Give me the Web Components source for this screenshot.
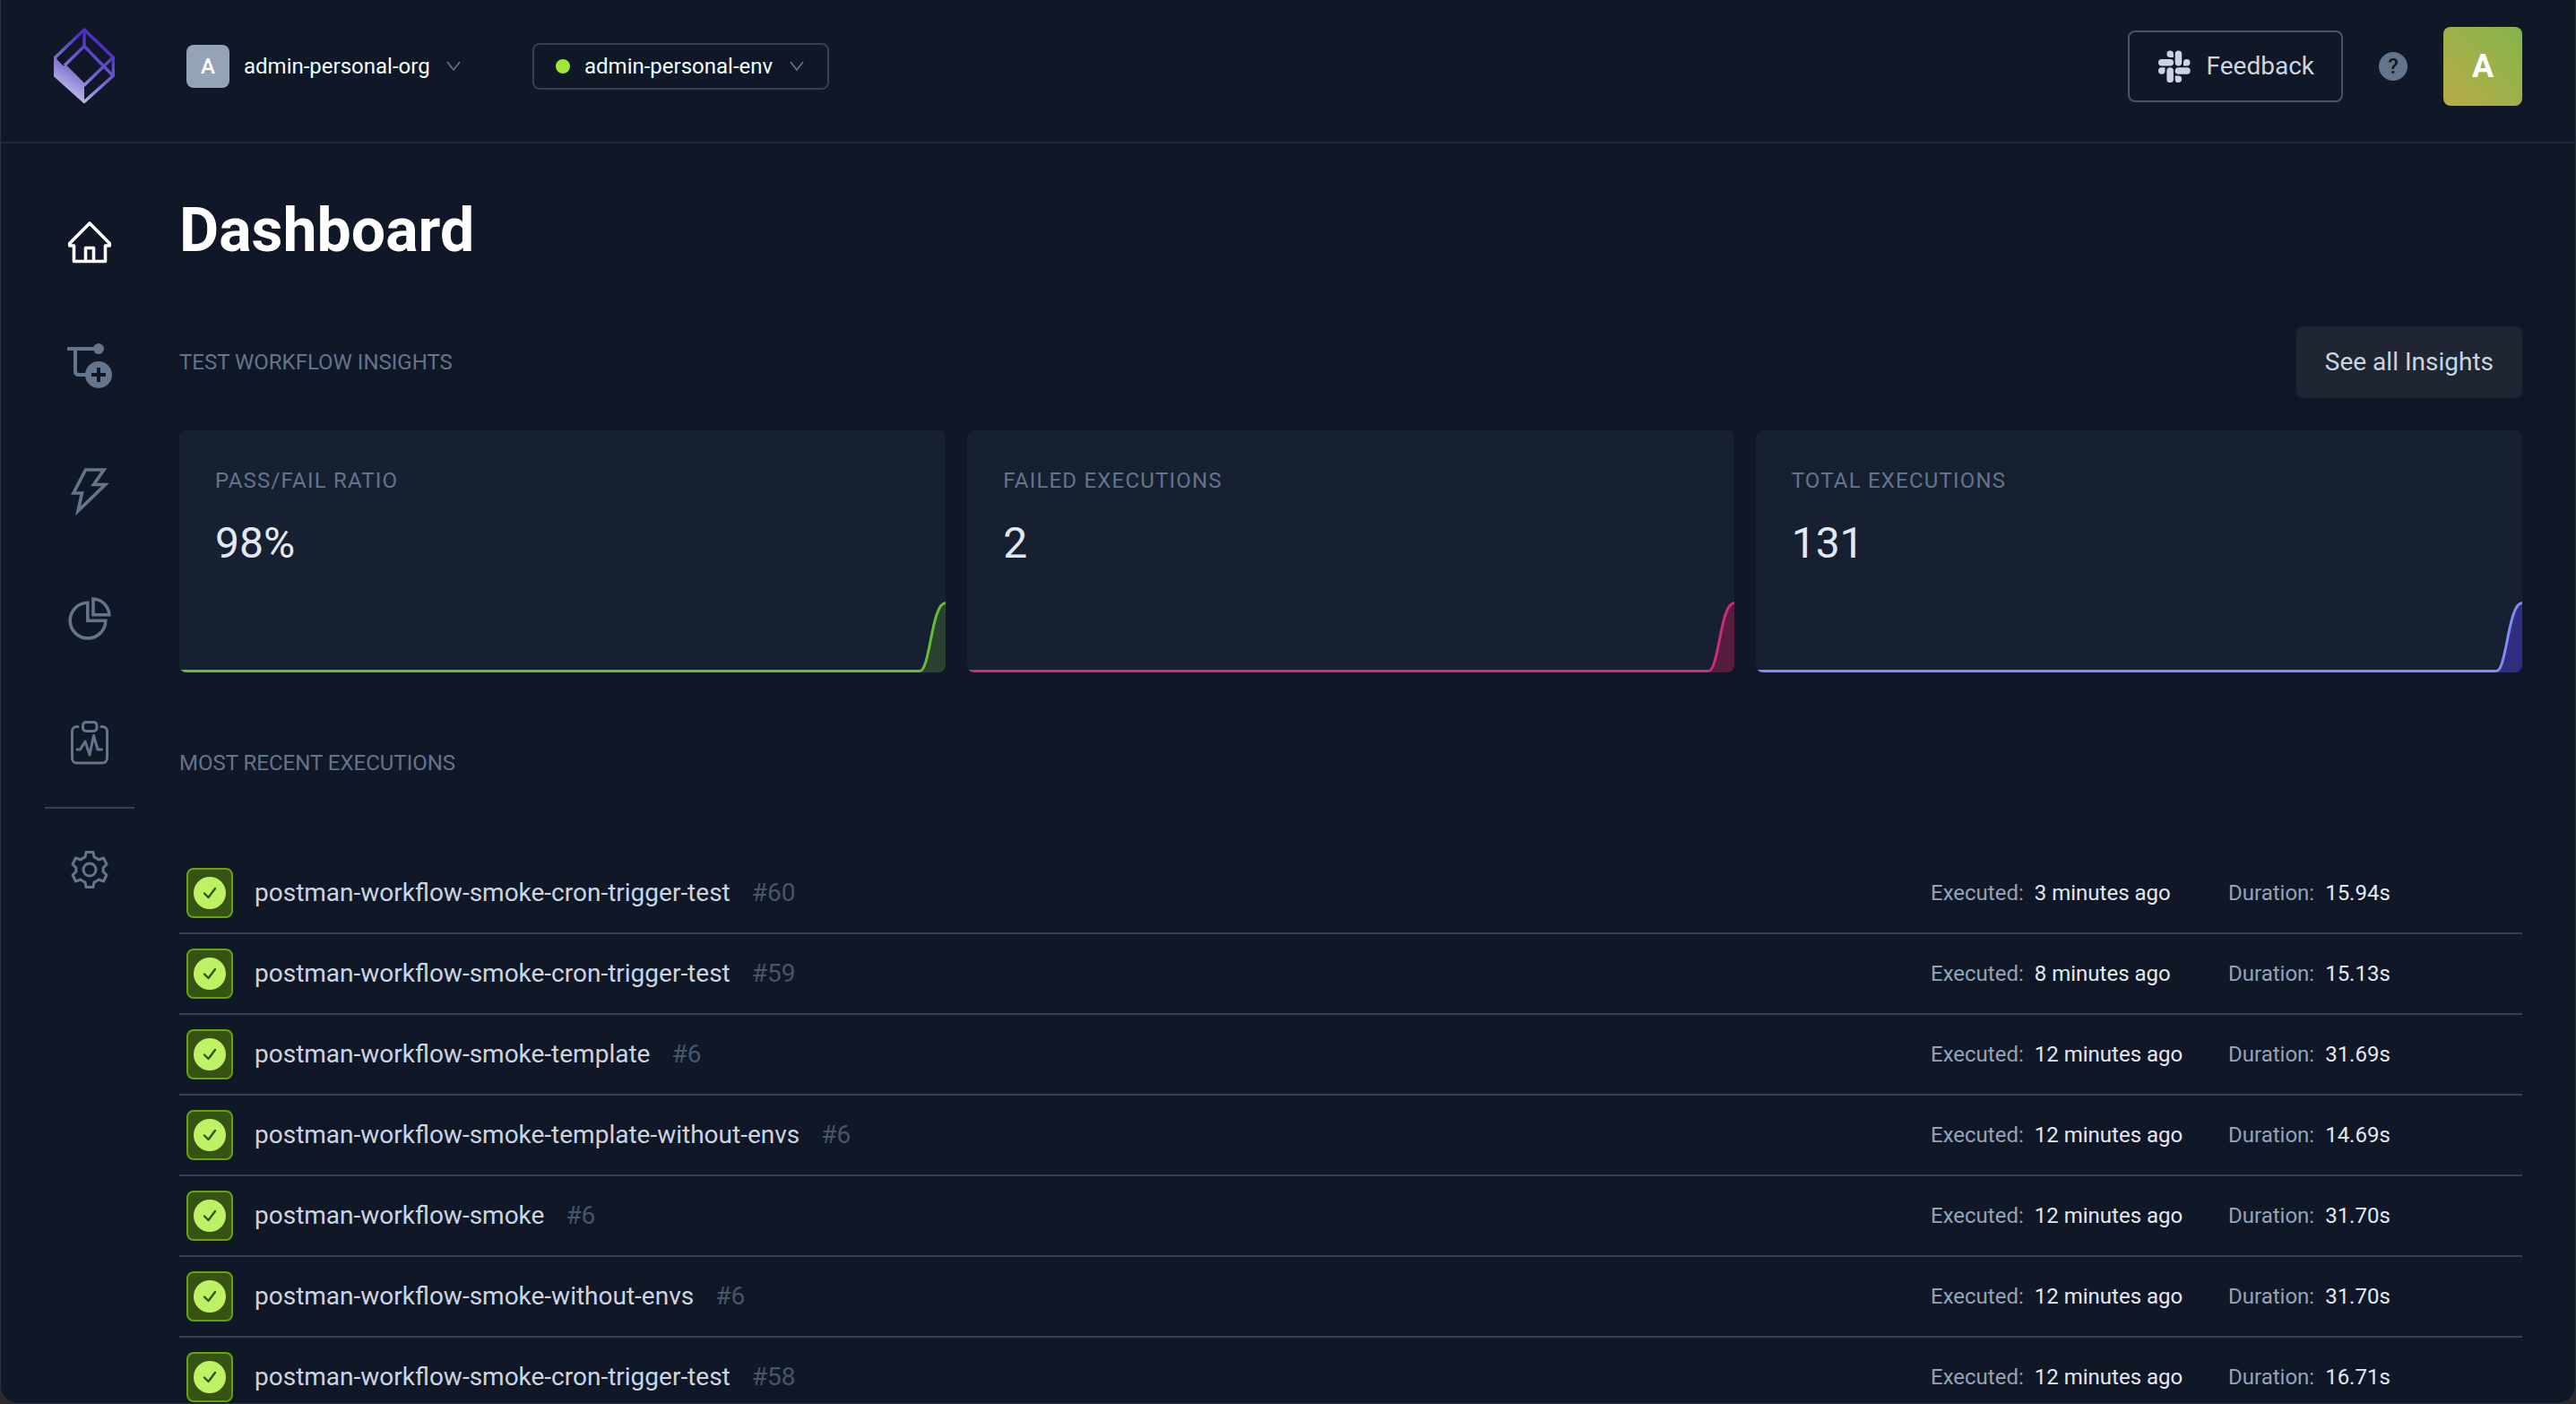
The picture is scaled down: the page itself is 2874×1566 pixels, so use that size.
<!DOCTYPE html>
<html lang="en">
<head>
<meta charset="utf-8">
<meta name="viewport" content="width=device-width, initial-scale=1">
<title>Dashboard</title>
<style>
  :root {
    --bg: #101726;
    --card: #172030;
    --line: #334155;
    --muted: #64748b;
    --soft: #94a3b8;
    --text: #cbd5e1;
    --strong: #e2e8f0;
  }
  html, body { margin: 0; height: 100%; background: #2b2a29; }
  body { font-family: Roboto, "Liberation Sans", sans-serif; font-size: 24px; line-height: 28px; color: var(--text); }
</style>
</head>
<body>
<app-shell>
  <top-bar slot="header">
    <org-picker></org-picker>
    <env-picker></env-picker>
  </top-bar>
  <side-nav slot="nav"></side-nav>
  <section-block heading="Test workflow insights">
    <action-button slot="action">See all Insights</action-button>
    <card-grid>
      <metric-card label="Pass/fail ratio" value="98%" style="--stroke:#66bd37;--fill:#2b4132"></metric-card>
      <metric-card label="Failed executions" value="2" style="--stroke:#cb2c80;--fill:#561d3d"></metric-card>
      <metric-card label="Total executions" value="131" style="--stroke:#818cf8;--fill:#312e81"></metric-card>
    </card-grid>
  </section-block>
  <section-block heading="Most recent executions" class="list">
    <execution-list>
      <execution-row name="postman-workflow-smoke-cron-trigger-test" number="60" when="3 minutes ago" duration="15.94s"></execution-row>
      <execution-row name="postman-workflow-smoke-cron-trigger-test" number="59" when="8 minutes ago" duration="15.13s"></execution-row>
      <execution-row name="postman-workflow-smoke-template" number="6" when="12 minutes ago" duration="31.69s"></execution-row>
      <execution-row name="postman-workflow-smoke-template-without-envs" number="6" when="12 minutes ago" duration="14.69s"></execution-row>
      <execution-row name="postman-workflow-smoke" number="6" when="12 minutes ago" duration="31.70s"></execution-row>
      <execution-row name="postman-workflow-smoke-without-envs" number="6" when="12 minutes ago" duration="31.70s"></execution-row>
      <execution-row name="postman-workflow-smoke-cron-trigger-test" number="58" when="12 minutes ago" duration="16.71s"></execution-row>
    </execution-list>
  </section-block>
</app-shell>

<script>
const define = (name, render) => customElements.define(name, class extends HTMLElement {
  constructor() {
    super();
    this.attachShadow({ mode: "open" });
  }
  connectedCallback() {
    const t = document.createElement("template");
    t.innerHTML = `<style>*{box-sizing:border-box}svg{display:block;flex:none}button,select{font:inherit;color:inherit;margin:0}</style>` + render(this);
    this.shadowRoot.replaceChildren(t.content.cloneNode(true));
  }
});

define("app-shell", () => `
  <style>
    :host { display: flex; flex-direction: column; box-sizing: border-box; height: 100vh; overflow: hidden;
      background: var(--bg); border: 1px solid #2c323e; border-top: 0; border-radius: 0 0 20px 20px; }
    .body { flex: 1; display: flex; min-height: 0; }
    main { flex: 1; min-width: 0; padding: 56px 59px 0 0; overflow-y: auto; scrollbar-width: none; }
    h1 { margin: 0 0 66px; font-size: 68px; line-height: 82px; font-weight: 700; color: #fff; }
  </style>
  <slot name="header"></slot>
  <div class="body">
    <slot name="nav"></slot>
    <main><h1>Dashboard</h1><slot></slot></main>
  </div>`);

const chevron = `<svg width="16" height="12" viewBox="0 0 16 12" fill="none" stroke="#707580" stroke-width="1.6"><path d="M1 1l7 9 7-9"/></svg>`;

define("org-picker", () => `
  <style>
    :host { display: block; }
    label { display: flex; align-items: center; gap: 16px; color: #ecfeff; }
    .tile { display: grid; place-items: center; width: 48px; height: 48px; border-radius: 8px; background: var(--soft); color: #fff; font-weight: 500; }
    select { appearance: none; border: 0; padding: 0 2px 0 0; background: none; outline: 0; }
  </style>
  <label><span class="tile">A</span>
    <select aria-label="Organization"><option>admin-personal-org</option></select>${chevron}</label>`);

define("env-picker", () => `
  <style>
    :host { display: block; }
    label { display: flex; align-items: center; gap: 16px; height: 52px; padding: 0 26px 0 24px;
      border: 2px solid var(--line); border-radius: 8px; color: #ecfeff; }
    .dot { width: 16px; height: 16px; border-radius: 50%; background: #a3e635; }
    select { appearance: none; border: 0; padding: 0 2px 0 0; background: none; outline: 0; }
  </style>
  <label><span class="dot"></span>
    <select aria-label="Environment"><option>admin-personal-env</option></select>${chevron}</label>`);

define("top-bar", () => `
  <style>
    :host { display: block; flex: none; }
    header { display: flex; align-items: center; justify-content: space-between; padding: 30px 59px 40px; border-bottom: 2px solid #1e293b; }
    .left { display: flex; align-items: center; gap: 80px; }
    .right { display: flex; align-items: center; gap: 40px; }
    .feedback { display: flex; align-items: center; gap: 18px; height: 80px; padding: 0 30px 0 32px; background: none;
      border: 2px solid #475569; border-radius: 8px; font-size: 28px; color: var(--text); }
    .help { padding: 0; border: 0; border-radius: 50%; width: 32px; height: 32px; background: var(--muted); color: var(--bg);
      font-size: 24px; line-height: 32px; font-weight: 500; }
    .user { width: 88px; height: 88px; padding: 0; border: 0; border-radius: 8px; font-size: 36px; font-weight: 700; color: #fff;
      background: linear-gradient(45deg, #b8ab48, #85b54b); }
  </style>
  <header>
    <div class="left">
      <svg width="68" height="86" viewBox="1 1 68 86" fill="none" role="img" aria-label="Home">
        <defs><linearGradient id="g" gradientUnits="userSpaceOnUse" x1="18" y1="76" x2="52" y2="20">
          <stop offset="0" stop-color="#bdb9e6"/><stop offset=".5" stop-color="#7463cf"/><stop offset="1" stop-color="#4c2fc7"/></linearGradient></defs>
        <g stroke="url(#g)" stroke-width="3.4" stroke-linejoin="round">
          <path d="M35 3L67.300 34V54.500L35 83.500L2.700 54.500V34Z"/>
          <path d="M35 3V22M13 43L35 21.500L67 54.500M13 43L35 65L67 34"/>
        </g>
        <path d="M1 33L35 66V84.500L1 54Z" fill="url(#g)"/>
      </svg>
      <slot></slot>
    </div>
    <div class="right">
      <button class="feedback">
        <svg width="36" height="36" viewBox="0 0 36 36" fill="#cbd5e1">
          <path d="M13.200 0.500a3.700 3.700 0 0 0 0 7.500h3.700V4.200a3.700 3.700 0 0 0-3.700-3.700z"/>
          <rect x="0" y="10" width="17" height="7.500" rx="3.750"/>
          <path d="M35.500 13.800a3.700 3.700 0 0 0-7.500 0v3.700h3.700a3.700 3.700 0 0 0 3.800-3.700z"/>
          <rect x="18.700" y="0.500" width="7.500" height="17" rx="3.750"/>
          <path d="M22.400 36a3.700 3.700 0 0 0 0-7.500h-3.700v3.700a3.700 3.700 0 0 0 3.700 3.800z"/>
          <rect x="18.700" y="19.200" width="17" height="7.500" rx="3.750"/>
          <path d="M0 22.900a3.700 3.700 0 0 0 7.500 0v-3.700H3.700A3.700 3.700 0 0 0 0 22.900z"/>
          <rect x="9.400" y="19.200" width="7.500" height="17" rx="3.750"/>
        </svg>Feedback</button>
      <button class="help" aria-label="Help">?</button>
      <button class="user" aria-label="Account">A</button>
    </div>
  </header>`);

define("side-nav", () => `
  <style>
    :host { display: block; flex: none; width: 199px; }
    nav { display: flex; flex-direction: column; padding: 40px 50px 0 49px; }
    a { display: grid; place-items: center; height: 140px; color: var(--muted); }
    a.on { color: #fff; }
    a.rule { border-top: 2px solid var(--line); }
    svg { fill: none; stroke: currentColor; stroke-width: 3; }
  </style>
  <nav>
    <a class="on" href="#home" aria-label="Dashboard"><svg width="50" height="50" viewBox="0 0 50 50" style="stroke-width:3.600" stroke-linejoin="round">
      <path d="M25 4L2.700 26.500V29H7.500V46.500H42.500V29H47.300V26.500Z"/><path d="M20.500 46.500V31.500H29.500V46.500"/></svg></a>
    <a href="#workflows" aria-label="Test workflows"><svg width="50" height="54" viewBox="0 0 50 54" style="stroke-width:4">
      <path d="M0 6H35M9 6V31Q9 35 13 35H22"/><circle cx="35" cy="6" r="6" fill="currentColor" stroke="none"/>
      <circle cx="35" cy="35" r="15" fill="currentColor" stroke="none"/><path d="M35 27V43M27 35H43" style="stroke:var(--bg)"/></svg></a>
    <a href="#triggers" aria-label="Triggers"><svg width="50" height="58" viewBox="0 0 50 58" style="stroke-width:3.600">
      <path d="M20.500 3H41L29.500 19.500H42.500L12 49L16.500 29H7Z"/></svg></a>
    <a href="#insights" aria-label="Insights"><svg width="50" height="50" viewBox="0 0 50 50" style="stroke-width:3.600">
      <path d="M22.800 7.300A19.800 19.800 0 1 0 42.800 27.200H22.800Z"/><path d="M29 3V20.800H46.800A18.500 18.500 0 0 0 29 3Z"/></svg></a>
    <a href="#status" aria-label="Status pages"><svg width="50" height="54" viewBox="0 0 50 54" stroke-linecap="round" stroke-linejoin="round">
      <path d="M12 7.500H10.500A5 5 0 0 0 5.500 12.500V43A5 5 0 0 0 10.500 48H39.500A5 5 0 0 0 44.500 43V12.500A5 5 0 0 0 39.500 7.500H38"/>
      <rect x="17.500" y="2.500" width="15.500" height="10" rx="3.500"/><path d="M11 33H14.500L20 24L25 39L29.500 17.500L34 33H38.500"/></svg></a>
    <a class="rule" href="#settings" aria-label="Settings"><svg width="44" height="46" viewBox="0 0 44 46" stroke-linejoin="round">
      <circle cx="22" cy="22" r="7"/>
      <path d="M18 2.500H26L27 8Q30 9 32 11L37.500 9L41 16L37 20Q37.500 22 37 24L41 28L37.500 35L32 33Q30 35 27 36L26 41.500H18L17 36Q14 35 12 33L6.500 35L3 28L7 24Q6.500 22 7 20L3 16L6.500 9L12 11Q14 9 17 8Z"/></svg></a>
  </nav>`);

define("action-button", () => `
  <style>
    :host { display: block; }
    button { height: 80px; padding: 0 32px; border: 0; border-radius: 8px; background: #1f2532; font-size: 28px; color: var(--text); }
  </style>
  <button><slot></slot></button>`);

define("section-block", el => `
  <style>
    :host { display: block; margin-bottom: 61px; }
    .head { display: flex; align-items: center; justify-content: space-between; min-height: 80px; margin-bottom: 36px; }
    :host(.list) .head { margin-bottom: 61px; }
    h2 { margin: 0; font-size: 24px; line-height: 28px; font-weight: 400; color: var(--muted); text-transform: uppercase; }
  </style>
  <div class="head"><h2>${el.getAttribute("heading")}</h2><slot name="action"></slot></div>
  <slot></slot>`);

define("card-grid", () => `
  <style>:host { display: grid; grid-template-columns: repeat(3, 1fr); gap: 24px; }</style><slot></slot>`);

define("metric-card", el => `
  <style>
    :host { display: flex; flex-direction: column; justify-content: space-between; height: 270px; border-radius: 8px; overflow: hidden; background: var(--card); }
    .info { display: flex; flex-direction: column; gap: 28px; padding: 42px 40px 0; }
    .label { letter-spacing: 0.05em; text-transform: uppercase; color: var(--muted); }
    .value { font-size: 48px; line-height: 56px; color: var(--strong); }
    .spark { display: flex; align-items: flex-end; padding-left: 2px; }
    .flat { flex: 1; height: 3px; background: var(--stroke); }
  </style>
  <div class="info"><span class="label">${el.getAttribute("label")}</span><span class="value">${el.getAttribute("value")}</span></div>
  <div class="spark"><div class="flat"></div>
    <svg width="29" height="80" viewBox="0 0 29 80">
      <path d="M0 80V78.500C12 78.500 13 2.500 29 2.500V80Z" fill="var(--fill)"/>
      <path d="M0 78.500C12 78.500 13 2.500 29 2.500" fill="none" stroke="var(--stroke)" stroke-width="3"/>
    </svg></div>`);

define("execution-list", () => `<style>:host { display: block; }</style><div role="list"><slot></slot></div>`);

define("execution-row", el => `
  <style>
    :host { display: block; }
    .row { display: flex; align-items: center; height: 90px; padding-left: 8px; border-bottom: 2px solid var(--line); }
    .status { display: grid; place-items: center; width: 52px; height: 56px; margin-right: 24px; border: 2px solid #65a30d; border-radius: 8px; background: #365314; }
    .name { font-size: 28px; line-height: 32px; margin-right: 24px; }
    .num { font-size: 28px; line-height: 32px; color: #475569; flex: 1; }
    .cell { display: flex; gap: 12px; width: 332px; color: var(--soft); }
    .cell:last-child { width: 328px; }
    .cell b { font-weight: 400; color: var(--strong); }
  </style>
  <div class="row" role="listitem">
    <span class="status"><svg width="36" height="36" viewBox="0 0 36 36"><circle cx="18" cy="18" r="18" fill="#bef264"/>
      <path d="M12 18.500L16.500 23L24 13" fill="none" stroke="#365314" stroke-width="2.400" stroke-linecap="round" stroke-linejoin="round"/></svg></span>
    <span class="name">${el.getAttribute("name")}</span><span class="num">#${el.getAttribute("number")}</span>
    <span class="cell"><span>Executed:</span><b>${el.getAttribute("when")}</b></span>
    <span class="cell"><span>Duration:</span><b>${el.getAttribute("duration")}</b></span>
  </div>`);
</script>
</body>
</html>
